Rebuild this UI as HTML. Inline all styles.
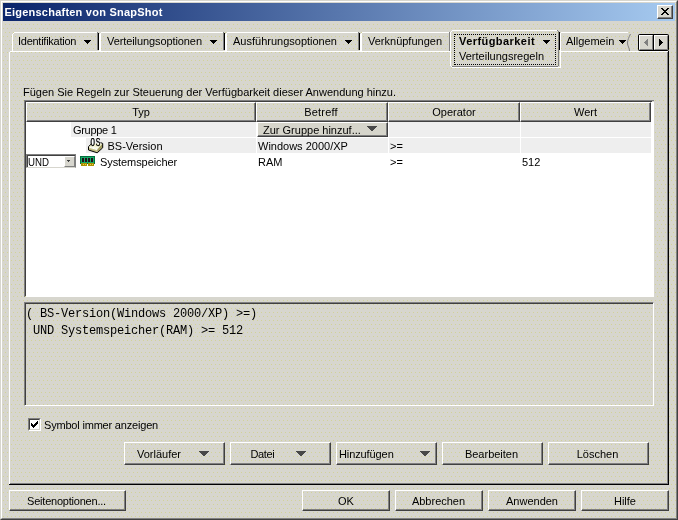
<!DOCTYPE html>
<html lang="de"><head><meta charset="utf-8"><title>Eigenschaften von SnapShot</title>
<style>
html,body{margin:0;padding:0;}
body{width:678px;height:520px;overflow:hidden;background:#d7d6ce;font-family:"Liberation Sans",sans-serif;font-size:11px;color:#000;position:relative;}
.abs{position:absolute;}
#win{position:absolute;left:0;top:0;width:678px;height:520px;box-sizing:border-box;background:#d7d6ce;
 border-top:1px solid #d7d6ce;border-left:1px solid #d7d6ce;border-right:1px solid #404040;border-bottom:1px solid #404040;}
#win2{position:absolute;left:1px;top:1px;width:676px;height:518px;box-sizing:border-box;border-top:1px solid #fff;border-left:1px solid #fff;border-right:1px solid #808080;border-bottom:1px solid #808080;}
#title{position:absolute;left:3px;top:3px;width:672px;height:18px;background:linear-gradient(to right,#0a246a 0%,#a6caf0 100%);}
#title span{position:absolute;left:1.4px;top:2px;letter-spacing:0.23px;color:#fff;font-weight:bold;font-size:11px;line-height:14px;white-space:nowrap;}
#close{position:absolute;left:657px;top:5px;width:16px;height:14px;box-sizing:border-box;background:#d7d6ce;border-top:1px solid #fff;border-left:1px solid #fff;border-right:1px solid #404040;border-bottom:1px solid #404040;}
#close i{position:absolute;left:0;top:0;width:13px;height:11px;border-right:1px solid #808080;border-bottom:1px solid #808080;}
.t{position:absolute;white-space:nowrap;line-height:13px;font-size:11px;}
.btn{position:absolute;box-sizing:border-box;border-top:1px solid #fff;border-left:1px solid #fff;border-right:1px solid #404040;border-bottom:1px solid #404040;}
.btn:before{content:"";position:absolute;left:0;top:0;right:0;bottom:0;border-right:1px solid #808080;border-bottom:1px solid #808080;}
.btn span{position:absolute;left:0;right:0;top:4px;text-align:center;line-height:13px;font-size:11px;white-space:nowrap;}
.arr{position:absolute;width:0;height:0;border-left:6px solid transparent;border-right:6px solid transparent;border-top:6px solid #404040;}
.sarr{position:absolute;width:0;height:0;border-left:4px solid transparent;border-right:4px solid transparent;border-top:4px solid #000;}
</style></head><body>
<div id="root" style="position:absolute;left:0;top:0;width:678px;height:520px;will-change:transform;">
<div id="win"></div><div id="win2"></div>
<svg class="abs" style="left:0;top:0" width="678" height="520" shape-rendering="crispEdges"><defs><pattern id="dz" width="8" height="8" patternUnits="userSpaceOnUse"><path d="M1 0h1v1H1zM5 0h1v1H5zM3 4h1v1H3zM7 4h1v1H7z" fill="#d2d296"/></pattern></defs><rect x="2" y="2" width="674" height="516" fill="url(#dz)"/></svg>
<div id="title"><span>Eigenschaften von SnapShot</span></div>
<div id="close"><i></i><svg class="abs" style="left:3px;top:2px" width="8" height="7" shape-rendering="crispEdges"><path d="M0 0h2v1H0zM6 0h2v1H6zM1 1h2v1H1zM5 1h2v1H5zM2 2h4v1H2zM3 3h2v1H3zM2 4h4v1H2zM1 5h2v1H1zM5 5h2v1H5zM0 6h2v1H0zM6 6h2v1H6z" fill="#000"/></svg></div>

<!-- content panel + tabs -->
<svg class="abs" style="left:0;top:0" width="678" height="520" shape-rendering="crispEdges" fill="none" stroke-width="1">
<g stroke="#fff">
<path d="M9.5 52V484 M10 51.5H450 M560 51.5H668 M560.5 52V68 M452 67.5H560"/>
<path d="M12.5 34V51 M13 33.5h1 M14 32.5H97"/>
<path d="M99.5 34V51 M100.5 33V51 M101 32.5H223"/>
<path d="M225.5 34V51 M226.5 33V51 M227 32.5H358"/>
<path d="M360.5 34V51 M361.5 33V51 M362 32.5H449"/>
<path d="M560.5 33V51 M561 32.5H628"/>
<path d="M450.5 32V66 M451 31.5h1 M452 30.5H557 M451 66.5h1"/>
</g>
<g stroke="#808080">
<path d="M97.5 32V50 M223.5 32V50 M358.5 32V50 M449.5 32V51"/>
<path d="M558.5 31V66 M557 30.5h1 M452 66.5H558"/>
<path d="M667.5 52V484 M10 483.5H668"/>
</g>
<g stroke="#000">
<path d="M98.5 33V50 M224.5 33V50 M359.5 33V50"/>
<path d="M559.5 32V50"/>
<path d="M668.5 51V485 M9 484.5H669"/>
</g>
<path d="M630.5 34 C629 37 627.5 40 627.5 43 C627.5 46 629.5 48 629.5 51" stroke="#808080" shape-rendering="auto"/>
<g fill="#000" stroke="none">
<path d="M84 40h7l-3.5 4z M210 40h7l-3.5 4z M345 40h7l-3.5 4z M543 40h7l-3.5 4z M619 40h7l-3.5 4z"/>
</g>
</svg>
<div class="abs" style="left:454px;top:34px;width:102px;height:31px;box-sizing:border-box;border:1px dotted #000;"></div>
<div class="t" style="left:18px;top:35px;letter-spacing:-0.26px">Identifikation</div>
<div class="t" style="left:107px;top:35px;letter-spacing:-0.09px">Verteilungsoptionen</div>
<div class="t" style="left:233px;top:35px;">Ausführungsoptionen</div>
<div class="t" style="left:368px;top:35px;">Verknüpfungen</div>
<div class="t" style="left:459px;top:35px;font-weight:bold;letter-spacing:0.44px">Verfügbarkeit</div>
<div class="t" style="left:459px;top:50px;">Verteilungsregeln</div>
<div class="t" style="left:566px;top:35px;">Allgemein</div>

<!-- scroll buttons -->
<div class="abs" style="left:638px;top:34px;width:31px;height:17px;background:#000;border-radius:2px"></div>
<div class="abs" style="left:639px;top:35px;width:14px;height:15px;box-sizing:border-box;background:#d7d6ce;border-top:1px solid #fff;border-left:1px solid #fff;border-right:1px solid #808080;border-bottom:1px solid #808080;"></div>
<div class="abs" style="left:654px;top:35px;width:14px;height:15px;box-sizing:border-box;background:#d7d6ce;border-top:1px solid #fff;border-left:1px solid #fff;border-right:1px solid #808080;border-bottom:1px solid #808080;"></div>
<svg class="abs" style="left:644px;top:39px" width="4" height="7" shape-rendering="crispEdges"><path d="M3 0h1v7H3zM2 1h1v5H2zM1 2h1v3H1zM0 3h1v1H0z" fill="#808080"/></svg>
<svg class="abs" style="left:659px;top:39px" width="4" height="7" shape-rendering="crispEdges"><path d="M0 0h1v7H0zM1 1h1v5H1zM2 2h1v3H2zM3 3h1v1H3z" fill="#000"/></svg>

<div class="t" style="left:23px;top:86px;">Fügen Sie Regeln zur Steuerung der Verfügbarkeit dieser Anwendung hinzu.</div>

<!-- table -->
<div class="abs" style="left:24px;top:100px;width:630px;height:197px;box-sizing:border-box;border-top:1px solid #808080;border-left:1px solid #808080;"></div>
<div class="abs" style="left:26px;top:122px;width:628px;height:175px;background:#fff;"></div>
<div class="abs" style="left:651px;top:102px;width:3px;height:20px;background:#fff;"></div>
<div class="abs" style="left:25px;top:101px;width:627px;height:195px;box-sizing:border-box;border-top:1px solid #404040;border-left:1px solid #404040;"></div>
<style>
.hd{box-sizing:border-box;border-top:1px solid #fff;border-left:1px solid #fff;border-right:1px solid #404040;border-bottom:1px solid #404040;}
.hd:before{content:"";position:absolute;left:0;top:0;right:0;bottom:0;border-right:1px solid #808080;border-bottom:1px solid #808080;}
.hd span{position:absolute;left:0;right:0;top:3px;text-align:center;line-height:13px;font-size:11px;}
.row{position:absolute;background:#eeeeee;height:15px;}
</style>
<div class="abs hd" style="left:26px;top:102px;width:230px;height:20px;"><span>Typ</span></div>
<div class="abs hd" style="left:256px;top:102px;width:132px;height:20px;"><span style="left:-2px;letter-spacing:0.15px">Betreff</span></div>
<div class="abs hd" style="left:388px;top:102px;width:132px;height:20px;"><span>Operator</span></div>
<div class="abs hd" style="left:520px;top:102px;width:131px;height:20px;"><span>Wert</span></div>

<!-- rows -->
<div class="row" style="left:71px;top:122px;width:185px;"></div>
<div class="row" style="left:389px;top:122px;width:131px;"></div>
<div class="row" style="left:521px;top:122px;width:130px;"></div>
<div class="row" style="left:86px;top:138px;width:170px;"></div>
<div class="row" style="left:257px;top:138px;width:131px;"></div>
<div class="row" style="left:389px;top:138px;width:131px;"></div>
<div class="row" style="left:521px;top:138px;width:130px;"></div>

<div class="t" style="left:73px;top:124px;letter-spacing:-0.3px">Gruppe 1</div>
<div class="btn" style="left:257px;top:122px;width:131px;height:15px;background:#d6d5cb;"><span style="top:1px;left:5px;text-align:left">Zur Gruppe hinzuf...</span><svg class="abs" style="left:109px;top:3px" width="10" height="5" shape-rendering="crispEdges"><path d="M0 0h10v1H0zM1 1h8v1H1zM2 2h6v1H2zM3 3h4v1H3zM4 4h2v1H4z" fill="#484848"/></svg></div>

<!-- OS icon -->
<svg class="abs" style="left:88px;top:138px" width="16" height="16" viewBox="88 138 16 16">
<path d="M88.5 146.8 L91.8 143.6 L102.6 143.6 L97.2 149.4Z" fill="#f3f1cf"/>
<path d="M88.5 146.8 L97.2 149.4 L97.2 152.6 L88.5 150Z" fill="#cfcb92"/>
<path d="M97.2 149.4 L102.6 143.6 L102.6 147.6 L97.2 152.6Z" fill="#a29c60"/>
<path d="M89.2 147.2 L97.2 149.6" stroke="#fff" stroke-width="1" fill="none"/>
<path d="M92 147 L95 147.3 M95 148.2 L98.5 147.6" stroke="#fff" stroke-width="0.9" fill="none"/>
<path d="M90 149.6 L95.5 151.2" stroke="#b4ae74" stroke-width="1" fill="none"/>
<rect x="92" y="139" width="2" height="6" fill="#fff"/>
<path d="M97.3 139.5 L98.6 139.5 M97.4 141.8 L98.6 143.8" stroke="#fff" stroke-width="1" fill="none"/>
<path d="M91.5 143.8 L88.5 146.6 L88.5 150 L97.2 152.8 L102.7 147.8 L102.7 143.4 L100.5 142.6" fill="none" stroke="#000" stroke-width="1"/>
<g font-family="Liberation Sans, sans-serif" font-size="10.8" fill="#000" stroke="#000" stroke-width="0.35"><text x="90.6" y="145.9" textLength="4.4" lengthAdjust="spacingAndGlyphs">0</text><text x="95.8" y="145.9" textLength="4.6" lengthAdjust="spacingAndGlyphs">S</text></g>
</svg>
<div class="t" style="left:107.5px;top:140px;">BS-Version</div>
<div class="t" style="left:258px;top:140px;">Windows 2000/XP</div>
<div class="t" style="left:390px;top:140px;">&gt;=</div>

<!-- combo -->
<div class="abs" style="left:26px;top:154px;width:50px;height:14px;box-sizing:border-box;background:#fff;border-top:1px solid #808080;border-left:1px solid #808080;border-right:1px solid #808080;border-bottom:1px solid #d7d6ce;"></div>
<div class="abs" style="left:27px;top:155px;width:48px;height:12px;box-sizing:border-box;border-top:1px solid #404040;border-left:1px solid #404040;"></div>
<div class="t" style="left:28px;top:156px;transform:scaleX(0.88);transform-origin:0 0;">UND</div>
<div class="abs" style="left:64px;top:156px;width:11px;height:11px;box-sizing:border-box;background:#d7d6ce;border-top:1px solid #fff;border-left:1px solid #fff;border-right:1px solid #808080;border-bottom:1px solid #808080;"></div>
<svg class="abs" style="left:67px;top:160px" width="3" height="2" shape-rendering="crispEdges"><path d="M0 0h3v1H0zM1 1h1v1H1z" fill="#404040"/></svg>
<!-- RAM icon -->
<svg class="abs" style="left:80px;top:156px" width="15" height="10" viewBox="0 0 15 10" shape-rendering="crispEdges">
<rect x="0" y="0" width="15" height="8" fill="#00703c"/>
<rect x="1" y="1" width="13" height="6" fill="#18a868"/>
<rect x="2" y="2" width="2" height="4" fill="#201018"/><rect x="5" y="2" width="2" height="4" fill="#201018"/><rect x="8" y="2" width="2" height="4" fill="#201018"/><rect x="11" y="2" width="2" height="4" fill="#201018"/>
<rect x="1" y="7" width="6" height="3" fill="#a89000"/><rect x="8" y="7" width="6" height="3" fill="#a89000"/>
<rect x="7" y="7" width="1" height="1" fill="#00703c"/>
<rect x="3" y="8" width="1" height="1" fill="#f0d040"/><rect x="5" y="8" width="1" height="1" fill="#f0d040"/><rect x="10" y="8" width="1" height="1" fill="#f0d040"/><rect x="12" y="8" width="1" height="1" fill="#f0d040"/>
</svg>
<div class="t" style="left:100px;top:156px;letter-spacing:-0.08px">Systemspeicher</div>
<div class="t" style="left:258px;top:156px;">RAM</div>
<div class="t" style="left:390px;top:156px;">&gt;=</div>
<div class="t" style="left:522px;top:156px;">512</div>

<!-- expression panel -->
<div class="abs" style="left:24px;top:302px;width:630px;height:104px;box-sizing:border-box;border-top:1px solid #808080;border-left:1px solid #808080;border-right:1px solid #fff;border-bottom:1px solid #fff;"></div>
<div class="abs" style="left:25px;top:303px;width:628px;height:102px;box-sizing:border-box;border-top:1px solid #404040;border-left:1px solid #404040;"></div>
<div class="t" style="left:26px;top:307px;font-family:'Liberation Mono','DejaVu Sans Mono',monospace;font-size:12px;line-height:14px;letter-spacing:-0.2px;white-space:pre">( BS-Version(Windows 2000/XP) &gt;=)</div>
<div class="t" style="left:33px;top:324px;font-family:'Liberation Mono','DejaVu Sans Mono',monospace;font-size:12px;line-height:14px;letter-spacing:-0.2px;white-space:pre">UND Systemspeicher(RAM) &gt;= 512</div>

<!-- checkbox -->
<div class="abs" style="left:28px;top:418px;width:13px;height:13px;box-sizing:border-box;background:#fff;border-top:1px solid #808080;border-left:1px solid #808080;border-right:1px solid #fff;border-bottom:1px solid #fff;"></div>
<div class="abs" style="left:29px;top:419px;width:11px;height:11px;box-sizing:border-box;border-top:1px solid #404040;border-left:1px solid #404040;border-right:1px solid #d7d6ce;border-bottom:1px solid #d7d6ce;"></div>
<svg class="abs" style="left:31px;top:421px" width="7" height="7" shape-rendering="crispEdges"><path d="M0 2h1v3H0zM1 3h1v3H1zM2 4h1v3H2zM3 3h1v3H3zM4 2h1v3H4zM5 1h1v3H5zM6 0h1v3H6z" fill="#000"/></svg>
<div class="t" style="left:44px;top:419px;letter-spacing:-0.19px">Symbol immer anzeigen</div>

<!-- action buttons -->
<div class="btn" style="left:124px;top:442px;width:101px;height:23px;"><span style="left:12px;right:auto;top:5px">Vorläufer</span><svg class="abs ar" style="left:74px;top:8px" width="10" height="5" shape-rendering="crispEdges"><path d="M0 0h10v1H0zM1 1h8v1H1zM2 2h6v1H2zM3 3h4v1H3zM4 4h2v1H4z" fill="#484848"/></svg></div>
<div class="btn" style="left:230px;top:442px;width:101px;height:23px;"><span style="left:19.5px;right:auto;top:5px;letter-spacing:-0.4px">Datei</span><svg class="abs ar" style="left:65px;top:8px" width="10" height="5" shape-rendering="crispEdges"><path d="M0 0h10v1H0zM1 1h8v1H1zM2 2h6v1H2zM3 3h4v1H3zM4 4h2v1H4z" fill="#484848"/></svg></div>
<div class="btn" style="left:336px;top:442px;width:101px;height:23px;"><span style="left:2px;right:auto;top:5px;letter-spacing:-0.1px">Hinzufügen</span><svg class="abs ar" style="left:83px;top:8px" width="10" height="5" shape-rendering="crispEdges"><path d="M0 0h10v1H0zM1 1h8v1H1zM2 2h6v1H2zM3 3h4v1H3zM4 4h2v1H4z" fill="#484848"/></svg></div>
<div class="btn" style="left:442px;top:442px;width:101px;height:23px;"><span style="top:5px;left:-2px">Bearbeiten</span></div>
<div class="btn" style="left:548px;top:442px;width:101px;height:23px;"><span style="top:5px;left:-2px">Löschen</span></div>

<!-- bottom buttons -->
<div class="btn" style="left:9px;top:490px;width:117px;height:21px;"><span style="top:4px;left:-2px;letter-spacing:-0.22px">Seitenoptionen...</span></div>
<div class="btn" style="left:302px;top:490px;width:88px;height:21px;"><span style="top:4px">OK</span></div>
<div class="btn" style="left:395px;top:490px;width:88px;height:21px;"><span style="top:4px;left:-1px">Abbrechen</span></div>
<div class="btn" style="left:488px;top:490px;width:88px;height:21px;"><span style="top:4px">Anwenden</span></div>
<div class="btn" style="left:581px;top:490px;width:88px;height:21px;"><span style="top:4px">Hilfe</span></div>
</div>
</body></html>
